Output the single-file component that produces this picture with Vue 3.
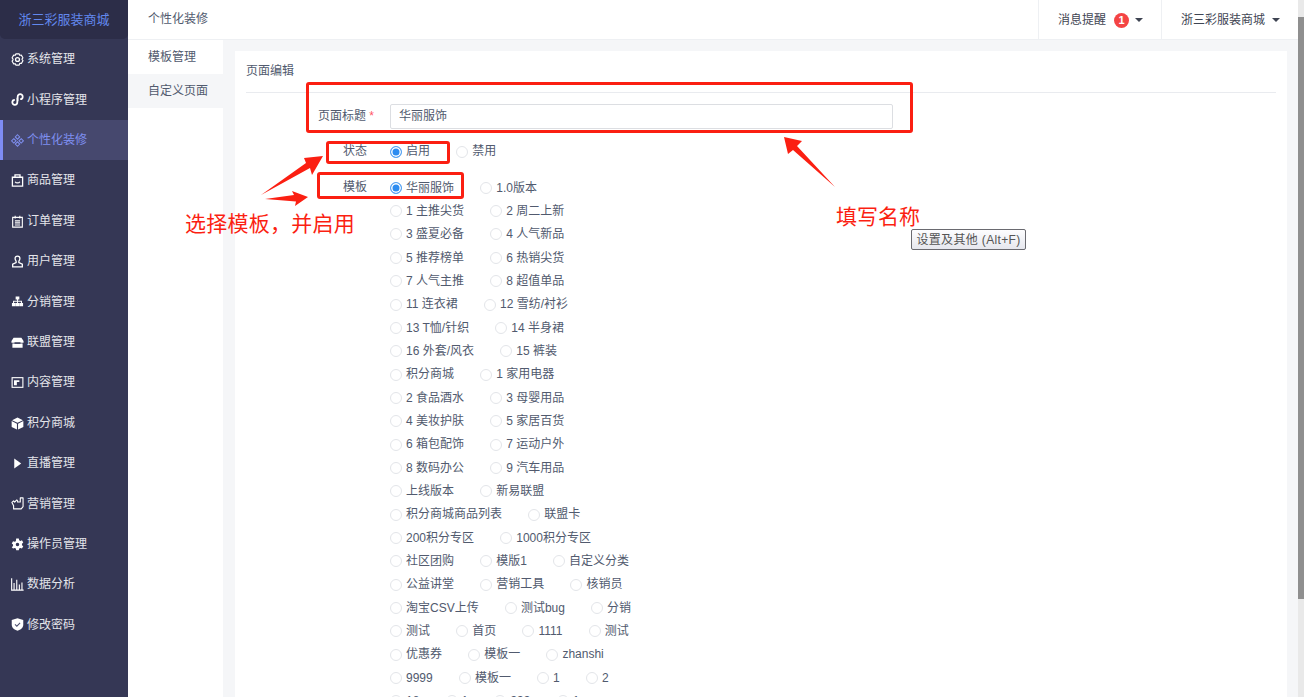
<script setup>
const menu = [
  ['系统管理', 'gear'], ['小程序管理', 'mini'], ['个性化装修', 'deco'], ['商品管理', 'bag'], ['订单管理', 'order'],
  ['用户管理', 'user'], ['分销管理', 'org'], ['联盟管理', 'shop'], ['内容管理', 'content'], ['积分商城', 'cube'],
  ['直播管理', 'play'], ['营销管理', 'hand'], ['操作员管理', 'cog'], ['数据分析', 'chart'], ['修改密码', 'shield'],
]
const rows = [
  ['1 主推尖货', '2 周二上新'], ['3 盛夏必备', '4 人气新品'], ['5 推荐榜单', '6 热销尖货'], ['7 人气主推', '8 超值单品'],
  ['11 连衣裙', '12 雪纺/衬衫'], ['13 T恤/针织', '14 半身裙'], ['16 外套/风衣', '15 裤装'], ['积分商城', '1 家用电器'],
  ['2 食品酒水', '3 母婴用品'], ['4 美妆护肤', '5 家居百货'], ['6 箱包配饰', '7 运动户外'], ['8 数码办公', '9 汽车用品'],
  ['上线版本', '新易联盟'], ['积分商城商品列表', '联盟卡'], ['200积分专区', '1000积分专区'], ['社区团购', '模版1', '自定义分类'],
  ['公益讲堂', '营销工具', '核销员'], ['淘宝CSV上传', '测试bug', '分销'], ['测试', '首页', '1111', '测试'],
  ['优惠券', '模板一', 'zhanshi'], ['9999', '模板一', '1', '2'], ['18', '1', '333', '1'],
]
</script>

<template>
  <div class="page">
    <aside class="side">
      <div class="brand">浙三彩服装商城</div>
      <nav class="menu">
        <div v-for="m in menu" :key="m[0]" class="mi" :class="{ on: m[1] === 'deco' }">
          <svg class="ic" viewBox="0 0 14 14" fill="none" stroke="currentColor" stroke-width="1.4">
            <template v-if="m[1] === 'gear'"><circle cx="7" cy="7" r="2.100" /><path d="M5.200 1h3.600l.6 1.500 1.700-.2 1.700 2.900-1 1.300.1.500 1 1.300-1.700 2.900-1.700-.2L8.800 13H5.200l-.6-1.500-1.700.2-1.700-2.900 1-1.300v-1l-1-1.300 1.700-2.900 1.700.2z" stroke-linejoin="round" stroke-width="1.200" /></template>
            <template v-else-if="m[1] === 'mini'"><path d="M6.800 5v5a2.700 2.700 0 1 1-2.700-2.700M7.200 9V4a2.700 2.700 0 1 1 2.700 2.700" stroke-width="1.900" /></template>
            <template v-else-if="m[1] === 'deco'"><path d="M7 .8l2.400 2.400L7 5.600 4.600 3.200zM3 5l2.400 2.400L3 9.800.6 7.400zM11 5l2.400 2.400L11 9.800 8.600 7.400zM7 8.400l2.400 2.400L7 13.200l-2.400-2.400z" stroke-width="1.100" /></template>
            <template v-else-if="m[1] === 'bag'"><path d="M1.500 3.500h11v9.500h-11zM4.300 3.500V1h5.400v2.500M4.500 8.300c1 1.800 4 1.800 5 0" /></template>
            <template v-else-if="m[1] === 'order'"><path d="M1.800 2.500h10.400V13H1.800zM4.500 .8v3M9.500 .8v3M4.200 6.300h5.600M4.200 8.500h5.600M4.200 10.800h5.600" stroke-width="1.200" /></template>
            <template v-else-if="m[1] === 'user'"><path d="M7 1.200c1.600 0 2.600 1.100 2.600 2.700 0 1.200-.5 2-1.100 2.700v1.600l3.700 1.700v2.800H1.800V9.900l3.700-1.700V6.600C4.900 5.900 4.400 5.100 4.400 3.900 4.400 2.300 5.400 1.200 7 1.200z" /></template>
            <template v-else-if="m[1] === 'org'"><g fill="currentColor" stroke="none"><path d="M5 1.500h4v3.300H7.600v1.400h4.200v2.300H13V12H9.200V8.500h1.500v-1.200H7.500v1.200H9V12H5V8.500h1.500V7.300H3.300v1.200H4.800V12H1V8.500h1.200V6.200h4.300V4.800H5z" /></g></template>
            <template v-else-if="m[1] === 'shop'"><path fill="currentColor" stroke="none" d="M2.800 1.800h8.400L13.500 5.500v1.700h-13V5.500zM1.500 8h11v4.700h-11z" /><rect x="3.800" y="6.800" width="6.400" height="1.600" fill="#353755" stroke="none" /></template>
            <template v-else-if="m[1] === 'content'"><rect x="1.200" y="1.800" width="11.600" height="10.400" stroke-width="1.200" /><path fill="currentColor" stroke="none" d="M3.200 4.500h5.800v2H6.300v3.500H3.200z" /></template>
            <template v-else-if="m[1] === 'cube'"><path fill="currentColor" stroke="none" d="M7 .5l5.800 2.900L7 6.300 1.200 3.400zM.7 4.400l5.700 2.800v6.300L.7 10.700zM13.300 4.400L7.600 7.200v6.300l5.700-2.800z" /></template>
            <template v-else-if="m[1] === 'play'"><path fill="currentColor" stroke="none" d="M3.500 1.500l7.500 5.500-7.500 5.500z" /></template>
            <template v-else-if="m[1] === 'hand'"><path d="M1 5.800l1.800-1.600 1.200 1.300 2.200-2.300.9.900v1.300h2.900V1h3v9.300L11 12.800H2.800V9.300z" stroke-linejoin="round" stroke-width="1.200" /></template>
            <template v-else-if="m[1] === 'cog'"><path fill="currentColor" stroke="none" fill-rule="evenodd" d="M5.600.6h2.800l.4 1.800 1.200.7 1.800-.6 1.400 2.400-1.400 1.200v1.600l1.400 1.200-1.400 2.400-1.800-.6-1.200.7-.4 1.800H5.600l-.4-1.800-1.200-.7-1.800.6L.8 9.900l1.400-1.200V7.100L.8 5.900l1.400-2.400 1.800.6 1.200-.7zM7 5.100a1.900 1.900 0 1 0 0 3.800 1.900 1.900 0 0 0 0-3.800z" /></template>
            <template v-else-if="m[1] === 'chart'"><path d="M.7 .3v12.800h12.900M3.300 5.500v7M6.200 1.800v10.700M9 7v5.500M11.800 4.800v7.700" stroke-width="1.200" /></template>
            <template v-else><path fill="currentColor" stroke="none" d="M7 .2l6.200 2v5.100c0 3.200-2.700 5.400-6.200 6.500C3.500 12.700.8 10.500.8 7.300V2.200z" /><path d="M4.300 6.800l2 2 3.500-3.500" stroke="#4d5070" stroke-width="1.100" /></template>
          </svg>
          <span>{{ m[0] }}</span>
        </div>
      </nav>
    </aside>
    <section class="sub">
      <div class="sub-h">个性化装修</div>
      <div class="sub-i">模板管理</div>
      <div class="sub-i cur">自定义页面</div>
    </section>
    <div class="right">
      <header class="top">
        <div class="tb">消息提醒<b class="badge">1</b><i class="caret"></i></div>
        <div class="tb">浙三彩服装商城<i class="caret c2"></i></div>
      </header>
      <main class="main">
        <div class="card">
          <h3 class="title">页面编辑</h3>
          <div class="f-title">
            <label class="lab-t">页面标题 <em>*</em></label>
            <div class="input">华丽服饰</div>
          </div>
          <div class="f f-s">
            <label class="lab">状态</label>
            <div class="radios">
              <div class="line">
                <span class="r sel"><i></i>启用</span>
                <span class="r"><i></i>禁用</span>
              </div>
            </div>
          </div>
          <div class="f f-m">
            <label class="lab">模板</label>
            <div class="radios">
              <div class="line">
                <span class="r sel"><i></i>华丽服饰</span>
                <span class="r"><i></i>1.0版本</span>
              </div>
              <div v-for="(row, i) in rows" :key="i" class="line">
                <span v-for="(t, j) in row" :key="j" class="r"><i></i>{{ t }}</span>
              </div>
            </div>
          </div>
        </div>
      </main>
    </div>
    <div class="sb"><div class="thumb"></div></div>

    <div class="box b1"></div>
    <div class="box b2"></div>
    <div class="box b3"></div>
    <svg class="arrows" width="1304" height="697" viewBox="0 0 1304 697">
      <path fill="#fb1f12" d="M261 195L306 163 304 158 323 156 312 175 310 168z" />
      <path fill="#fb1f12" d="M265 199L294 195 292 191 308 197 295 206 296 201.500z" />
      <path fill="#fb1f12" d="M784 137L802 141 797 146 835 187 793 150 788 154z" />
    </svg>
    <div class="note n1">选择模板，并启用</div>
    <div class="note n2">填写名称</div>
    <div class="tip">设置及其他 (Alt+F)</div>
  </div>
</template>

<style scoped>
.page { position: relative; width: 1304px; height: 697px; overflow: hidden; display: flex; background: #f5f6f8; font: 12px/1.2 "Liberation Sans", "Noto Sans CJK SC", sans-serif; color: #515a6e; }
.side { width: 128px; flex: none; background: #353755; color: #e4e5ea; }
.brand { height: 39px; background: #2c2d48; border-radius: 0 0 5px 5px; color: #6288ee; font-size: 13px; line-height: 39px; text-align: center; }
.menu { padding-top: 0.3px; }
.mi { height: 40.4px; display: flex; align-items: center; padding-left: 11px; gap: 3px; }
.mi.on { background: #46486e; color: #7f8ff0; box-shadow: inset 3px 0 #7e8cf5; }
.ic { width: 13px; height: 13px; flex: none; color: #fff; }
.mi.on .ic { color: #7f8ff0; }
.sub { width: 95px; flex: none; background: #fff; }
.sub-h { height: 40px; line-height: 39px; padding-left: 20px; border-bottom: 1px solid #eef0f3; box-sizing: border-box; }
.sub-i { height: 34px; line-height: 34px; padding-left: 20px; }
.sub-h + .sub-i { margin-top: 0; line-height: 35px; }
.sub-i.cur { background: #f5f6f8; }
.right { flex: 1; min-width: 0; display: flex; flex-direction: column; }
.top { height: 40px; line-height: 40px; flex: none; background: #fff; border-bottom: 1px solid #eef0f3; box-sizing: border-box; display: flex; justify-content: flex-end; padding-right: 6px; }
.tb { display: flex; align-items: center; padding: 1px 18px 0 19px; border-left: 1px solid #eef0f3; color: #3e4452; }
.badge { width: 15px; height: 15px; border-radius: 50%; background: #f44444; color: #fff; font-size: 11px; line-height: 15px; text-align: center; margin-left: 8px; font-weight: 700; }
.caret { width: 0; height: 0; border: 4px solid transparent; border-top-color: #3e4452; border-bottom: 0; margin-left: 6px; }
.c2 { margin-left: 7px; }
.main { flex: 1; min-height: 0; padding: 11px 17px 0 12px; }
.card { background: #fff; height: 700px; padding: 0 11px; }
.title { margin: 0; height: 42px; line-height: 41px; font-size: 12px; font-weight: 400; border-bottom: 1px solid #e9ebef; box-sizing: border-box; }
.f-title { display: flex; align-items: center; margin-top: 11px; height: 25px; }
.lab-t { width: 72px; margin-left: 72px; flex: none; }
.lab-t em { color: #f56; font-style: normal; }
.input { flex: none; width: 503px; height: 25px; line-height: 23px; box-sizing: border-box; border: 1px solid #dcdee2; padding-left: 8px; border-radius: 2px; }
.f { display: flex; }
.lab { width: 144px; flex: none; box-sizing: border-box; padding-left: 97px; line-height: 23px; }
.f-s { margin-top: 11px; }
.f-m { margin-top: 12.800px; }
.radios { flex: 1; }
.line { height: 23.35px; display: flex; align-items: center; }
.r { display: inline-flex; align-items: center; margin-right: 26.200px; white-space: pre; }
.r i { width: 12px; height: 12px; box-sizing: border-box; border-radius: 50%; border: 1px solid #e3e5e9; margin-right: 4px; background: #fff; }
.r.sel i { border: 1.500px solid #57a3f3; box-shadow: inset 0 0 0 1.500px #fff; background: #2d8cf0; }
.sb { position: absolute; right: 0; top: 0; width: 6px; height: 697px; background: #e9e9e9; }
.thumb { margin-top: 17px; height: 582px; background: #8f8f8f; }
.box { position: absolute; border: 3px solid #fb1f12; border-radius: 3px; box-sizing: border-box; }
.b1 { left: 306px; top: 82px; width: 607px; height: 51px; }
.b2 { left: 326px; top: 141px; width: 124px; height: 23px; }
.b3 { left: 317px; top: 172px; width: 147px; height: 27px; }
.arrows { position: absolute; left: 0; top: 0; pointer-events: none; }
.note { position: absolute; color: #fb1f12; font-size: 21px; line-height: 28px; white-space: pre; font-family: "Noto Sans CJK SC", sans-serif; }
.n1 { left: 185px; top: 208px; letter-spacing: 0.25px; }
.n2 { left: 836px; top: 201px; }
.tip { position: absolute; left: 911px; top: 229px; width: 115px; height: 21px; box-sizing: border-box; border: 1px solid #6a6a70; border-radius: 2px; background: linear-gradient(#fdfdfe, #e6e7ee); font: 12px/20px "Liberation Sans", "Noto Sans CJK SC", sans-serif; letter-spacing: 0.35px; text-align: center; color: #555; }
</style>
